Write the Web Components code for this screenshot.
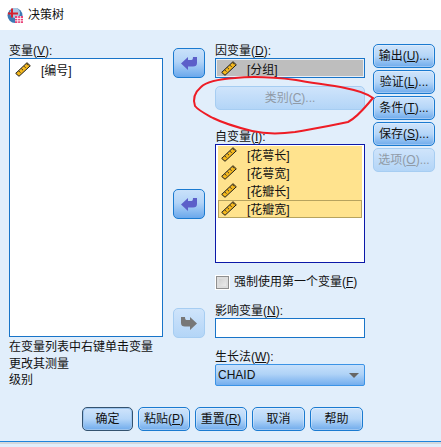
<!DOCTYPE html>
<html lang="zh"><head><meta charset="utf-8"><title>决策树</title>
<style>
html,body{margin:0;padding:0;background:#e1eefb}
body{font:12px/14px "Liberation Sans","Noto Sans CJK SC",sans-serif;color:#111}
u{text-underline-offset:1px}
</style></head><body>
<template id="ruler"><svg width="16" height="15" viewBox="0 0 16 15" style="display:block;flex:none"><path d="M.7 11.400 12 .7 15.300 3.800 4 14.300Z" fill="#f5b81c" stroke="#1a1a1a" stroke-width="1"/><path d="M3.800 9l1.600 1.600M6.400 6.600l1.600 1.600M9 4.200l1.600 1.600M11.600 1.800l1.600 1.600" stroke="#333" stroke-width="1"/></svg></template>
<spss-dialog>
  <spss-title slot="title">决策树</spss-title>
  <spss-col slot="left" style="width:154px">
    <spss-label>变量(<u>V</u>):</spss-label>
    <spss-list height="279" pad="2px 2px"><spss-var>[编号]</spss-var></spss-list>
    <spss-note>在变量列表中右键单击变量<br>更改其测量<br>级别</spss-note>
  </spss-col>
  <spss-col slot="arrows" style="width:32px">
    <spss-arrow style="margin-top:4px"></spss-arrow>
    <spss-arrow style="margin-top:111px"></spss-arrow>
    <spss-arrow style="margin-top:89px" dir="right"></spss-arrow>
  </spss-col>
  <spss-col slot="mid" style="width:150px">
    <spss-label>因变量(<u>D</u>):</spss-label>
    <spss-depbox><spss-var>[分组]</spss-var></spss-depbox>
    <spss-btn disabled style="margin-top:8px;height:24px;width:150px">类别(<u>C</u>)...</spss-btn>
    <spss-label style="margin-top:20px">自变量(<u>I</u>):</spss-label>
    <spss-list height="119" tone="dark" pad="1px 2px">
      <spss-var state="sel">[花萼长]</spss-var>
      <spss-var state="sel">[花萼宽]</spss-var>
      <spss-var state="sel">[花瓣长]</spss-var>
      <spss-var state="cur">[花瓣宽]</spss-var>
    </spss-list>
    <spss-check style="margin-top:12px">强制使用第一个变量(<u>F</u>)</spss-check>
    <spss-label style="margin-top:15px">影响变量(<u>N</u>):</spss-label>
    <spss-input></spss-input>
    <spss-label style="margin-top:12px">生长法(<u>W</u>):</spss-label>
    <spss-select>CHAID</spss-select>
  </spss-col>
  <spss-col slot="right" style="width:62px;gap:2px">
    <spss-btn style="height:24px">输出(<u>U</u>)...</spss-btn>
    <spss-btn style="height:24px">验证(<u>L</u>)...</spss-btn>
    <spss-btn style="height:24px">条件(<u>T</u>)...</spss-btn>
    <spss-btn style="height:24px">保存(<u>S</u>)...</spss-btn>
    <spss-btn disabled style="height:24px">选项(<u>O</u>)...</spss-btn>
  </spss-col>
  <spss-btn slot="foot" default style="width:51px;height:24px">确定</spss-btn>
  <spss-btn slot="foot" style="width:52px;height:24px">粘贴(<u>P</u>)</spss-btn>
  <spss-btn slot="foot" style="width:52px;height:24px">重置(<u>R</u>)</spss-btn>
  <spss-btn slot="foot" style="width:53px;height:24px">取消</spss-btn>
  <spss-btn slot="foot" style="width:53px;height:24px">帮助</spss-btn>
</spss-dialog>
<script>
function def(name,css,html,init){
  customElements.define(name,class extends HTMLElement{
    constructor(){super();const s=this.attachShadow({mode:'open'});s.innerHTML='<style>'+css+'</style>'+html;}
    connectedCallback(){if(init)init.call(this,this.shadowRoot);}
  });
}
const rulerHTML=()=>document.getElementById('ruler').innerHTML;
def('spss-dialog',`
  :host{display:flex;flex-direction:column;position:relative;width:441px;height:447px;overflow:hidden;background:#e1eefb}
  .main{display:flex;padding:14px 0 0 9px;height:352px;box-sizing:content-box;align-items:flex-start;margin-bottom:1px}
  .a{margin-left:10px}.m{margin-left:10px}.r{margin-left:8px}
  .foot{display:flex;gap:5px;padding:10px 0 0 82px}
  .rule{margin-top:10px;height:2px;border-top:1px solid #1f84dc;background-color:#d4d8dc;background-image:repeating-linear-gradient(90deg,transparent 0 75px,#8d949b 75px 76px);background-size:75px 100%;background-position:-29px 0}
  svg.ink{position:absolute;left:0;top:0;pointer-events:none}
`,`<slot name="title"></slot>
  <div class="main"><div><slot name="left"></slot></div><div class="a"><slot name="arrows"></slot></div><div class="m"><slot name="mid"></slot></div><div class="r"><slot name="right"></slot></div></div>
  <div class="foot"><slot name="foot"></slot></div><div class="rule"></div>
  <svg class="ink" width="441" height="447"><path d="M235 78C220 79 207 81 201 87C194 93 193 100 195 106C199 111 206 114 213 118C225 124 240 128 252 131C265 134 280 134 295 132C312 129 330 126 348 122C358 117 366 106 373 98C366 93 356 90 345 88C330 85 312 83 296 80C280 78 255 76 235 78Z" fill="none" stroke="#ee1c25" stroke-width="2"/></svg>`);
def('spss-title',`
  :host{display:flex;align-items:center;height:30px;background:#fff;padding-left:7px;gap:5px;font-size:12px;flex:none}
`,`<svg width="16" height="17" viewBox="0 0 16 17"><circle cx="8" cy="8.500" r="7.500" fill="#3d79b4"/><circle cx="8" cy="6" r="5" fill="#cfe2f2" opacity=".75"/><path d="M1 6.500h10M5 1.500v9" stroke="#d5222f" stroke-width="2"/><rect x="8" y="9" width="8" height="7" fill="#e8457a"/><path d="M8 11.500h8M8 13.800h8M10.700 9v7M13.400 9v7" stroke="#fff" stroke-width=".8"/></svg><slot></slot>`);
def('spss-col',`:host{display:flex;flex-direction:column}`,`<slot></slot>`);
def('spss-label',`:host{display:block;height:14px;line-height:14px;white-space:nowrap}`,`<slot></slot>`);
def('spss-note',`:host{display:block;line-height:16.5px;margin-top:2px;white-space:nowrap}`,`<slot></slot>`);
def('spss-list',`
  :host{display:block;box-sizing:border-box;background:#fff;border:1px solid #1874c8;overflow:hidden}
  :host([tone=dark]){border-color:#0b18a8}
`,`<slot></slot>`,function(){this.style.height=this.getAttribute('height')+'px';this.style.padding=this.getAttribute('pad')});
def('spss-var',`
  :host{display:flex;align-items:center;height:18px;box-sizing:border-box;padding-left:3px;gap:10px;white-space:nowrap}
  :host([state=sel]){background:#ffe38e}
  :host([state=cur]){background:#ffe38e;box-shadow:inset 0 0 0 1px #b7a35e}
  #i{display:flex;margin-top:-2px}
  #t{padding-top:2px}
`,`<span id="i"></span><span id="t"><slot></slot></span>`,function(s){s.getElementById('i').innerHTML=rulerHTML()});
def('spss-depbox',`
  :host{display:block;box-sizing:border-box;height:20px;background:#bebebe;border:1px solid #1874c8;box-shadow:inset 0 0 0 1px #e8eef5;padding:1px 0 0 2px;overflow:hidden}
`,`<slot></slot>`);
def('spss-btn',`
  :host{display:flex;align-items:center;justify-content:center;box-sizing:border-box;border:1px solid #1a7ad0;border-radius:5px;white-space:nowrap;
    background:linear-gradient(#cfe4fb,#b5d6f8 50%,#6fabec);color:#111;box-shadow:inset 0 0 0 1px rgba(255,255,255,.3)}
  :host([default]){border:1.5px solid #33526f;box-shadow:inset 0 0 0 1px #9cc4ee}
  :host([disabled]){border-color:#a6cdf2;background:linear-gradient(#cfe4fb,#b3d5f7);color:#909aa6;box-shadow:none}
`,`<span><slot></slot></span>`);
def('spss-arrow',`
  :host{display:flex;align-items:center;justify-content:center;box-sizing:border-box;width:32px;height:30px;border:1px solid #1a7ad0;border-radius:5px;background:linear-gradient(#c9e1fa,#b3d4f7 45%,#6aa8ec)}
  :host([dir=right]){border-color:#a6cdf2;background:linear-gradient(#cfe4fb,#b3d5f7)}
  :host([dir=right]) svg{transform:scaleX(-1)}
  :host([dir=right]) path{fill:#777}
`,`<svg width="16" height="13" viewBox="0 0 16 13"><path d="M0 6.500 7 0V3H10.500Q12 3 12 0H16V6Q16 9.500 12 9.500H7V13Z" fill="#5c5fc9"/></svg>`);
def('spss-check',`
  :host{display:flex;align-items:center;height:14px;gap:4px;padding-left:1px;white-space:nowrap}
  i{display:block;box-sizing:border-box;width:13px;height:13px;margin-right:1px;border:1px solid #8f8f8f;outline:1px solid #fff;background:linear-gradient(135deg,#c9c9c9,#f2f2f2);box-shadow:inset 0 0 0 2px #ddd}
`,`<i></i><span><slot></slot></span>`);
def('spss-input',`:host{display:block;box-sizing:border-box;height:20px;background:#fff;border:1px solid #1874c8}`,``);
def('spss-select',`
  :host{display:flex;align-items:center;justify-content:space-between;box-sizing:border-box;height:22px;padding:0 4px 0 2px;border:1px solid #3b93e6;border-radius:2px;background:linear-gradient(#c6e0fb,#b0d3f7 45%,#74aeee)}
  b{width:0;height:0;border:5px solid transparent;border-top:5px solid #666;border-bottom:0;margin-right:1px}
`,`<span><slot></slot></span><b></b>`);
</script>
</body></html>
